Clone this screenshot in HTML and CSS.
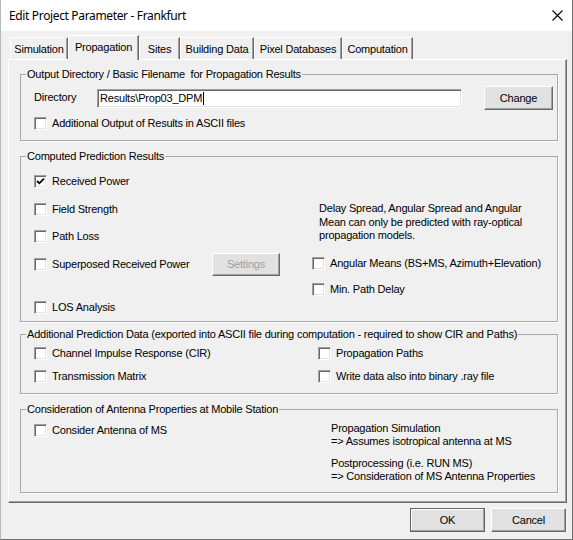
FILE: index.html
```html
<!DOCTYPE html>
<html>
<head>
<meta charset="utf-8">
<title>Edit Project Parameter - Frankfurt</title>
<link rel="stylesheet" href="styles.css">
</head>
<body>
<div class="win">
  <div class="titlebar">
    <span class="title">Edit Project Parameter - Frankfurt</span>
    <svg class="close" width="11" height="11" viewBox="0 0 11 11"><path d="M0.5 0.5 L10.5 10.5 M10.5 0.5 L0.5 10.5" stroke="#000" stroke-width="1.1" fill="none"/></svg>
  </div>
  <div class="client">
    <div class="tabs">
      <div class="tab t-sim">Simulation</div>
      <div class="tab t-prop active">Propagation</div>
      <div class="tab t-sites">Sites</div>
      <div class="tab t-bld">Building Data</div>
      <div class="tab t-pix">Pixel Databases</div>
      <div class="tab t-comp">Computation</div>
    </div>
    <div class="panel">
      <fieldset class="group g-out">
        <legend>Output Directory / Basic Filename&nbsp; for Propagation Results</legend>
        <div class="dir-row">
          <span class="dir-label">Directory</span>
          <div class="input"><span>Results\Prop03_DPM</span><span class="caret"></span></div>
          <div class="btn btn-change">Change</div>
        </div>
        <div class="check ascii"><span class="cb"></span><span>Additional Output of Results in ASCII files</span></div>
      </fieldset>

      <fieldset class="group g-comp">
        <legend>Computed Prediction Results</legend>
        <div class="cols">
          <div class="col-left">
            <div class="check"><span class="cb checked"><svg width="11" height="11" viewBox="0 0 11 11"><path d="M2 5 L4.3 7.3 L9 2.6" stroke="#000" stroke-width="1.8" fill="none"/></svg></span><span>Received Power</span></div>
            <div class="check"><span class="cb"></span><span>Field Strength</span></div>
            <div class="check"><span class="cb"></span><span>Path Loss</span></div>
            <div class="check"><span class="cb"></span><span class="sup-label">Superposed Received Power</span><div class="btn btn-settings disabled">Settings</div></div>
            <div class="check los"><span class="cb"></span><span>LOS Analysis</span></div>
          </div>
          <div class="col-right">
            <p class="note">Delay Spread, Angular Spread and Angular<br>Mean can only be predicted with ray-optical<br>propagation models.</p>
            <div class="check"><span class="cb"></span><span>Angular Means (BS+MS, Azimuth+Elevation)</span></div>
            <div class="check"><span class="cb"></span><span>Min. Path Delay</span></div>
          </div>
        </div>
      </fieldset>

      <fieldset class="group g-add">
        <legend>Additional Prediction Data (exported into ASCII file during computation - required to show CIR and Paths)</legend>
        <div class="cols">
          <div class="col-left">
            <div class="check"><span class="cb"></span><span>Channel Impulse Response (CIR)</span></div>
            <div class="check"><span class="cb"></span><span>Transmission Matrix</span></div>
          </div>
          <div class="col-right">
            <div class="check"><span class="cb"></span><span>Propagation Paths</span></div>
            <div class="check"><span class="cb"></span><span>Write data also into binary .ray file</span></div>
          </div>
        </div>
      </fieldset>

      <fieldset class="group g-ant">
        <legend>Consideration of Antenna Properties at Mobile Station</legend>
        <div class="cols">
          <div class="col-left">
            <div class="check"><span class="cb"></span><span>Consider Antenna of MS</span></div>
          </div>
          <div class="col-right">
            <p class="info">Propagation Simulation<br>=&gt; Assumes isotropical antenna at MS</p>
            <p class="info second">Postprocessing (i.e. RUN MS)<br>=&gt; Consideration of MS Antenna Properties</p>
          </div>
        </div>
      </fieldset>
    </div>
    <div class="buttons">
      <div class="btn btn-dlg btn-default">OK</div>
      <div class="btn btn-dlg">Cancel</div>
    </div>
  </div>
</div>
</body>
</html>
```
FILE: styles.css
```css
html, body {
  margin: 0;
  padding: 0;
}
body {
  width: 573px;
  height: 540px;
  overflow: hidden;
  background: #f0f0f0;
  font-family: "Liberation Sans", Arial, sans-serif;
  font-size: 11px;
  letter-spacing: -0.2px;
  color: #000;
}
.win {
  width: 573px;
  height: 540px;
  box-sizing: border-box;
  border-left: 1px solid #b9b9b9;
  border-right: 1px solid #6f6f6f;
  border-bottom: 1px solid #6f6f6f;
  background: #f0f0f0;
}
.titlebar {
  height: 31px;
  background: #fff;
  display: flex;
  align-items: center;
  justify-content: space-between;
  padding: 0 9px 0 8px;
}
.title {
  font-family: "Noto Sans", "Liberation Sans", sans-serif;
  font-size: 12px;
  letter-spacing: -0.35px;
  color: #000;
}
.close {
  display: block;
}
.client {
  padding-top: 4px;
}
.tabs {
  display: flex;
  align-items: flex-end;
  height: 24px;
  margin-left: 9px;
  position: relative;
  z-index: 1;
}
.tab {
  box-sizing: border-box;
  height: 22px;
  padding-top: 3px;
  line-height: 17px;
  text-align: center;
  border-top: 1px solid #fff;
  border-left: 1px solid #fff;
  border-right: 1px solid #696969;
  box-shadow: inset -1px 0 0 #a0a0a0;
  background: #f0f0f0;
  white-space: nowrap;
}
.tab.active {
  height: 25px;
  margin-bottom: -1px;
  padding-top: 3px;
}
.t-sim { width: 58px; }
.t-prop { width: 71px; }
.t-sites { width: 41px; }
.t-bld { width: 74px; }
.t-pix { width: 88px; }
.t-comp { width: 71px; }

.panel {
  box-sizing: border-box;
  margin-left: 7px;
  width: 559px;
  height: 444px;
  border-top: 1px solid #fff;
  border-left: 1px solid #fff;
  border-right: 1px solid #696969;
  border-bottom: 1px solid #696969;
  box-shadow: inset -1px -1px 0 #a0a0a0;
  padding: 8px 0 0 11px;
}
.group {
  box-sizing: border-box;
  width: 538px;
  margin: 0;
  padding: 0 0 0 13px;
  border: 1px solid #a8a8a8;
  box-shadow: 1px 1px 0 #fff;
  min-width: 0;
}
.group legend {
  padding: 0 1px;
  margin-left: -8px;
  line-height: 13px;
  white-space: pre;
}
.check {
  display: flex;
  align-items: center;
  height: 13px;
  line-height: 13px;
  white-space: nowrap;
}
.cb {
  box-sizing: border-box;
  width: 13px;
  height: 13px;
  flex: none;
  margin-right: 5px;
  background: #fff;
  border-top: 1px solid #a0a0a0;
  border-left: 1px solid #a0a0a0;
  border-right: 1px solid #fff;
  border-bottom: 1px solid #fff;
  box-shadow: inset 1px 1px 0 #696969, inset -1px -1px 0 #e3e3e3;
  position: relative;
}
.cb svg {
  position: absolute;
  left: 0;
  top: 0;
}

.btn {
  box-sizing: border-box;
  background: #e1e1e1;
  border: 1px solid;
  border-color: #fff #696969 #696969 #fff;
  box-shadow: inset -1px -1px 0 #a0a0a0, inset 1px 1px 0 #e3e3e3;
  display: flex;
  align-items: center;
  justify-content: center;
  flex: none;
}
.btn.disabled {
  color: #a0a0a0;
}

/* Group 1 */
.g-out {
  padding-bottom: 10px;
}
.dir-row {
  display: flex;
  align-items: center;
  height: 24px;
  margin-top: 5px;
}
.dir-label {
  width: 63px;
  flex: none;
  margin-top: -3px;
}
.input {
  box-sizing: border-box;
  width: 365px;
  height: 19px;
  background: #fff;
  border: 1px solid;
  border-color: #a0a0a0 #fff #fff #a0a0a0;
  box-shadow: inset 1px 1px 0 #696969, inset -1px -1px 0 #e3e3e3;
  display: flex;
  align-items: center;
  padding-left: 2px;
  flex: none;
}
.caret {
  display: block;
  width: 1px;
  height: 13px;
  background: #000;
  margin-left: 1px;
}
.btn-change {
  width: 69px;
  height: 24px;
  margin-left: 22px;
}
.ascii {
  margin-top: 7px;
}

/* Group 2 */
.g-comp {
  margin-top: 9px;
  padding-bottom: 7px;
}
.cols {
  display: flex;
}
.g-comp .col-left {
  width: 278px;
  flex: none;
  padding-top: 12px;
  display: flex;
  flex-direction: column;
  gap: 14.5px;
}
.sup-label {
  width: 160px;
}
.btn-settings {
  width: 68px;
  height: 23px;
  margin: -5px 0;
}
.g-comp .los {
  margin-top: 15.5px;
}
.g-comp .col-right {
  padding-top: 39px;
}
.note {
  margin: 0 0 14px 7px;
  line-height: 13.5px;
}
.g-comp .col-right .check + .check {
  margin-top: 13px;
}

/* Group 3 */
.g-add {
  margin-top: 6px;
  padding-bottom: 9.5px;
}
.g-add .col-left {
  width: 284px;
  flex: none;
  padding-top: 6.5px;
}
.g-add .col-right {
  padding-top: 6.5px;
}
.g-add .check + .check {
  margin-top: 10px;
}

/* Group 4 */
.g-ant {
  margin-top: 9px;
  padding-bottom: 8.5px;
}
.g-ant .col-left {
  width: 297px;
  flex: none;
  padding-top: 8.5px;
}
.g-ant .col-right {
  padding-top: 6.5px;
}
.info {
  margin: 0;
  line-height: 13px;
}
.info.second {
  margin-top: 9px;
}

/* Dialog buttons */
.buttons {
  display: flex;
  justify-content: flex-end;
  gap: 6px;
  margin-top: 5px;
  padding-right: 6px;
}
.btn-dlg {
  width: 75px;
  height: 24px;
}
.btn-default {
  border-color: #646464;
  box-shadow: inset -1px -1px 0 #a0a0a0, inset 1px 1px 0 #fff;
}
```
